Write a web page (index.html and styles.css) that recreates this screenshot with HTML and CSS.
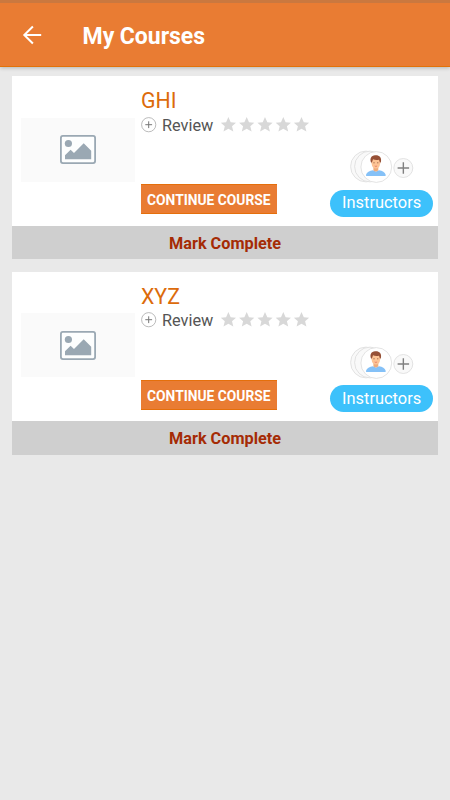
FILE: index.html
```html
<!DOCTYPE html>
<html lang="en">
<head>
<meta charset="utf-8">
<meta name="viewport" content="width=device-width, initial-scale=1">
<title>My Courses</title>
<link rel="stylesheet" href="styles.css">
</head>
<body>
<svg class="symbols" width="0" height="0" aria-hidden="true">
  <symbol id="picture" viewBox="0 0 36 29">
    <rect x="0.9" y="0.9" width="34.2" height="27.2" rx="2" fill="#fdfefe" stroke="#9aa8b3" stroke-width="1.8"/>
    <circle cx="8.4" cy="8.5" r="3.6" fill="#9aa8b3"/>
    <path d="M5 24.3V20.2L10.6 14.8L14 18L23.7 8.3L31.2 15.7V24.3Z" fill="#9aa8b3"/>
  </symbol>
  <symbol id="add" viewBox="0 0 16 16">
    <circle cx="7.7" cy="7.7" r="7.1" fill="#fff" stroke="#aaa" stroke-width="0.8"/>
    <path d="M4.3 7.7H11.1M7.7 4.3V11.1" stroke="#777" stroke-width="1" fill="none"/>
  </symbol>
  <symbol id="stars" viewBox="0 0 90 16">
    <g fill="#d8d8d8">
      <path id="star" d="M8.4 0L10.7 5.2L16 5.7L12 9.3L13.3 14.5L8.4 11.7L3.5 14.5L4.8 9.3L.8 5.7L6.1 5.2Z"/>
      <use href="#star" x="18.3"/><use href="#star" x="36.6"/><use href="#star" x="54.9"/><use href="#star" x="73.1"/>
    </g>
  </symbol>
  <symbol id="people" viewBox="0 0 64 34">
    <g fill="#f9f9f9" stroke="#dcdcdc" stroke-width="0.8">
      <circle cx="16" cy="16.5" r="15.4"/><circle cx="20" cy="16.5" r="15.4"/>
      <circle cx="26.3" cy="17" r="15.4" fill="#fff"/><circle cx="53.3" cy="18" r="9.5"/>
    </g>
    <path d="M16.1 26V24.6C16.8 22 19.5 21 23 20.3L26 21.6L29 20.3C32.5 21 34.9 22 35.6 24.6V26Z" fill="#85c1f7"/>
    <path d="M23.4 16.5H28.3V20.2Q25.9 22.6 23.4 20.2Z" fill="#efac7c"/>
    <path d="M21.5 9Q26 6.3 30.2 9V13.3Q29.6 18.6 25.9 18.6Q22.1 18.6 21.5 13.3Z" fill="#fdc495"/>
    <path d="M21 12.6C19.5 8.2 21.3 5.6 25 5.2C28.8 4.8 32.2 6.7 30.8 12.6H29.9L29 9.7Q25.4 10.3 23 9.3L21.9 12.6Z" fill="#965036"/>
    <path d="M23.3 12.8H24.7M27 12.8H28.4" stroke="#87523b" stroke-width=".7"/>
    <path d="M24.7 16Q25.9 16.9 27.1 16" stroke="#e57462" stroke-width=".8" fill="none"/>
    <path d="M47.6 18H59.1M53.35 12.3V23.8" stroke="#808080" stroke-width="1.4" fill="none"/>
  </symbol>
</svg>
<header class="app-bar">
  <svg class="back" viewBox="0 0 20 20" role="img" aria-label="Back"><path d="M10.9 1.5L2.3 10L10.9 18.5M2.4 10H19.2" fill="none" stroke="#fff" stroke-width="2"/></svg>
  <h1 class="app-title">My Courses</h1>
</header>
<main class="course-list">
  <article class="card">
    <div class="card-main">
      <div class="thumb"><svg class="picture"><use href="#picture"/></svg></div>
      <div class="details">
        <h2 class="course-name">GHI</h2>
        <div class="review"><svg class="add"><use href="#add"/></svg><span class="review-label">Review</span><svg class="stars"><use href="#stars"/></svg></div>
        <button class="continue">CONTINUE COURSE</button>
      </div>
      <div class="people-box"><svg class="people"><use href="#people"/></svg><button class="instructors">Instructors</button></div>
    </div>
    <button class="complete">Mark Complete</button>
  </article>
  <article class="card">
    <div class="card-main">
      <div class="thumb"><svg class="picture"><use href="#picture"/></svg></div>
      <div class="details">
        <h2 class="course-name">XYZ</h2>
        <div class="review"><svg class="add"><use href="#add"/></svg><span class="review-label">Review</span><svg class="stars"><use href="#stars"/></svg></div>
        <button class="continue">CONTINUE COURSE</button>
      </div>
      <div class="people-box"><svg class="people"><use href="#people"/></svg><button class="instructors">Instructors</button></div>
    </div>
    <button class="complete">Mark Complete</button>
  </article>
</main>
</body>
</html>
```
FILE: styles.css
```css
* { box-sizing: border-box; }
body { margin: 0; min-height: 800px; background: #e9e9e9; font-family: Roboto, sans-serif; }
svg { display: block; flex: none; }
.symbols { position: absolute; }
button { border: 0; padding: 0; margin: 0; font-family: inherit; white-space: nowrap; }
.app-bar { height: 67px; display: flex; align-items: center; padding: 4px 22px 0; background: #e97c33; border-top: 3px solid #ca783f; border-bottom: 1px solid #e27209; box-shadow: 0 1px 4px rgba(0,0,0,.22); }
.back { width: 20px; height: 20px; margin-top: -3px; }
.app-title { margin: 0 0 0 40.6px; font-size: 23px; letter-spacing: -.05px; line-height: 27px; font-weight: 700; color: #fff; }
.course-list { display: flex; flex-direction: column; gap: 12.5px; padding: 9.3px 11.7px; }
.card { height: 183px; background: #fff; }
.card-main { height: 149.4px; display: grid; grid-template-columns: 114px 1fr 102.4px; padding: 0 5.5px 0 9.3px; column-gap: 6px; }
.thumb { height: 64px; margin-top: 41.7px; background: #fafafa; display: flex; justify-content: center; align-items: center; }
.picture { width: 36px; height: 29px; }
.details { display: flex; flex-direction: column; align-items: flex-start; padding-top: 12px; }
.course-name { margin: 0; font-size: 21.3px; line-height: 25px; font-weight: 400; color: #dc6b0b; }
.review { height: 20px; margin-top: 2.7px; display: flex; align-items: center; white-space: nowrap; }
.add { width: 16px; height: 16px; margin-top: -2px; }
.review-label { margin-left: 5px; font-size: 16.3px; line-height: 20px; color: #555; }
.stars { width: 90px; height: 16px; margin: -2px 0 0 6.6px; }
.continue { width: 135.6px; height: 30px; margin-top: 48.3px; background: #e97c33; border-top: 1px solid #e56f0b; border-bottom: 1px solid #e56f0b; color: #fff; font-size: 13.8px; font-weight: 700; line-height: 30px; }
.people-box { display: flex; flex-direction: column; align-items: flex-start; padding-top: 74px; }
.people { width: 64px; height: 34px; margin-left: 19.8px; }
.instructors { width: 102.4px; height: 26.6px; margin-top: 5.7px; border-radius: 14px; background: #3dc1fb; color: #fff; font-size: 16.4px; line-height: 26px; }
.complete { display: block; width: 100%; height: 33.6px; background: #cfcfcf; color: #a52b05; font-size: 16.25px; line-height: 35px; font-weight: 700; }
```
